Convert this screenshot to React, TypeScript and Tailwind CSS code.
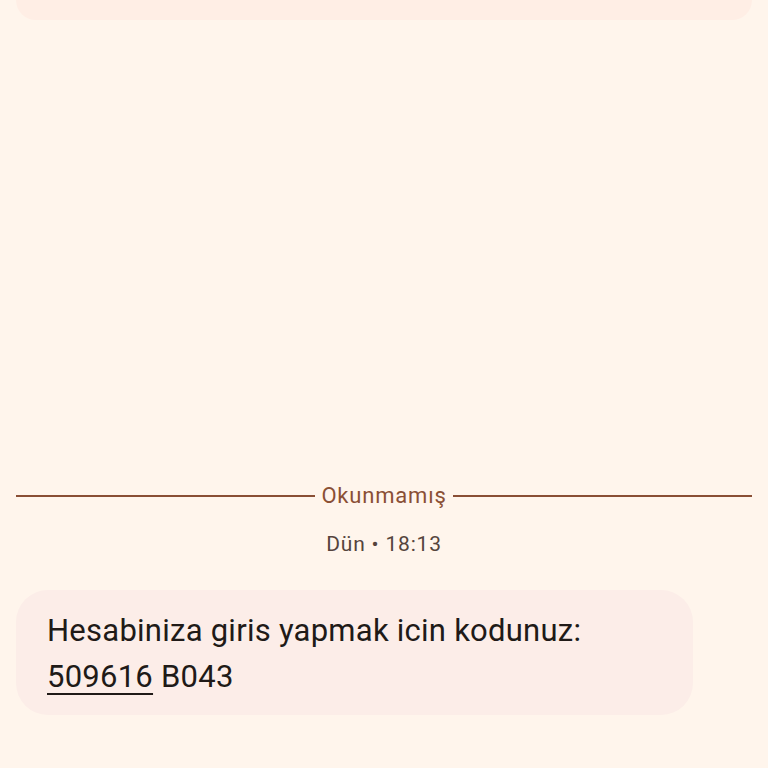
import React from "react";

export default function App() {
  return (
    <div
      className="flex h-[768px] w-[768px] flex-col overflow-hidden bg-[#FFF5EC]"
      style={{ fontFamily: "Roboto, 'Noto Sans', sans-serif" }}
    >
      <div className="mx-4 h-[20px] shrink-0 rounded-b-[24px] bg-[#FFEEE5]" />
      <div className="flex-1" />
      <div className="flex h-6 items-center gap-[6px] px-4">
        <div className="h-[1.5px] flex-1 bg-[#8a4f35]" />
        <span className="text-[22px] leading-6 tracking-[0.8px] text-[#8a4f35]">Okunmamış</span>
        <div className="h-[1.5px] flex-1 bg-[#8a4f35]" />
      </div>
      <div className="mt-[24px] flex h-6 items-center justify-center text-[21px] leading-6 tracking-[0.8px] text-[#55443d]">
        Dün • 18:13
      </div>
      <div className="mx-4 mb-[53px] mt-[34px] w-[677px] rounded-[32px] bg-[#FCEDE8] pb-[15px] pl-[31px] pr-4 pt-[18px] text-[31px] leading-[46px] tracking-[0.25px] text-[#201a17]">
        <div>Hesabiniza giris yapmak icin kodunuz:</div>
        <div>
          <span className="underline decoration-[2px] underline-offset-[6px]">509616</span> B043
        </div>
      </div>
    </div>
  );
}
